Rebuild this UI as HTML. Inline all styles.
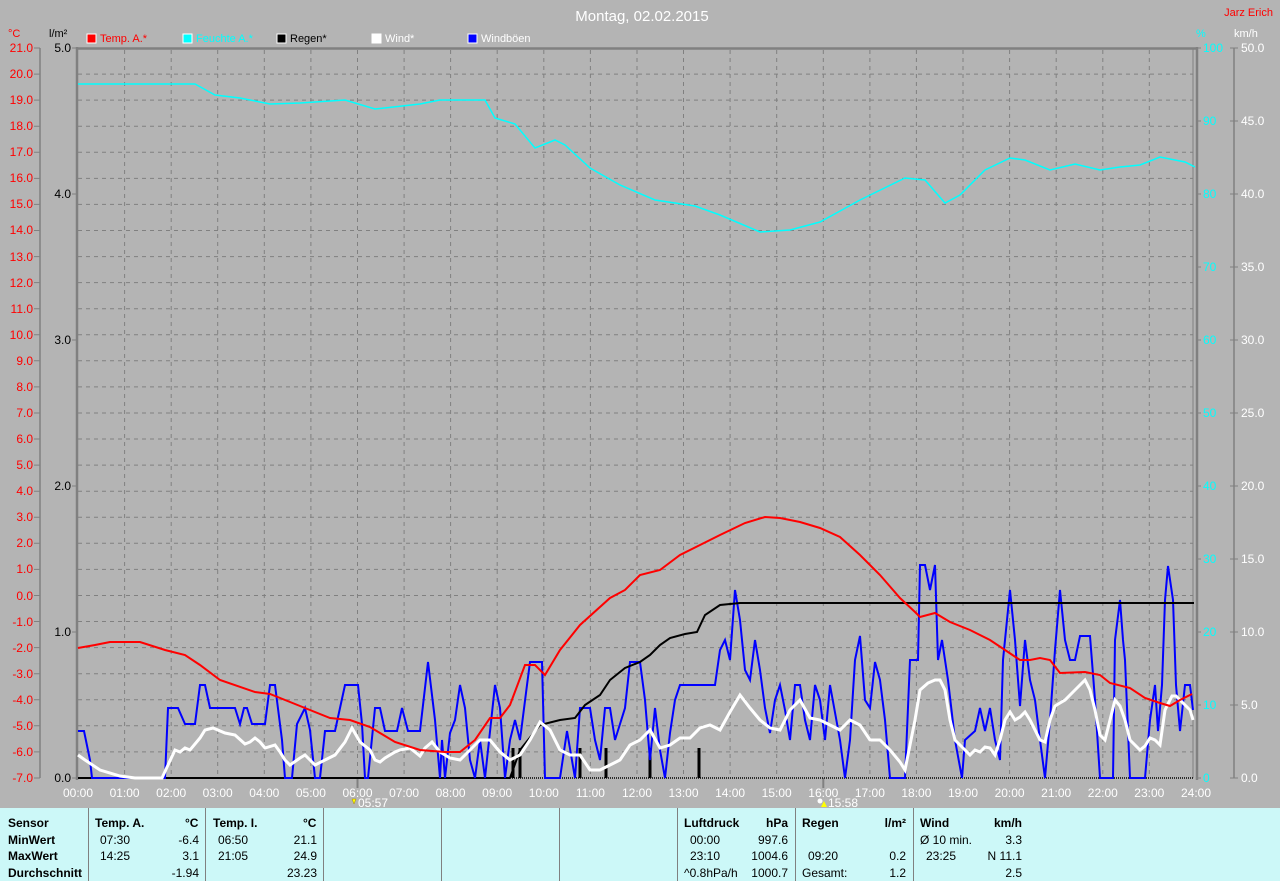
<!DOCTYPE html>
<html><head><meta charset="utf-8"><style>
html,body{margin:0;padding:0;width:1280px;height:881px;overflow:hidden;background:#b4b4b4;font-family:"Liberation Sans",sans-serif}
svg{position:absolute;left:0;top:0}
.tbl{position:absolute;left:0;top:808px;width:1280px;height:73px;background:#ccf8f8;font-size:12px;color:#000}
.col{position:absolute;top:0;height:73px;border-left:1px solid #808080}
.c{position:absolute;white-space:nowrap}
.b{font-weight:bold}
</style></head><body>
<svg width="1280" height="808" viewBox="0 0 1280 808" font-family="Liberation Sans, sans-serif">
<rect width="1280" height="808" fill="#b4b4b4"/>
<text x="642" y="21" font-size="15" fill="#fff" text-anchor="middle">Montag, 02.02.2015</text>
<text x="1273" y="16" font-size="11" fill="#f00" text-anchor="end">Jarz Erich</text>
<text x="8" y="37" font-size="11" fill="#f00">°C</text>
<text x="49" y="37" font-size="11" fill="#000">l/m²</text>
<text x="1196" y="37" font-size="11" fill="#0ff">%</text>
<text x="1234" y="37" font-size="11" fill="#fff">km/h</text>
<g font-size="11">
<rect x="87" y="34" width="9" height="9" fill="#f00" stroke="#fff"/><text x="100" y="42" fill="#f00">Temp. A.*</text>
<rect x="183" y="34" width="9" height="9" fill="#0ff" stroke="#fff"/><text x="196" y="42" fill="#0ff">Feuchte A.*</text>
<rect x="277" y="34" width="9" height="9" fill="#000" stroke="#fff"/><text x="290" y="42" fill="#000">Regen*</text>
<rect x="372" y="34" width="9" height="9" fill="#fff" stroke="#fff"/><text x="385" y="42" fill="#fff">Wind*</text>
<rect x="468" y="34" width="9" height="9" fill="#00f" stroke="#fff"/><text x="481" y="42" fill="#fff">Windböen</text>
</g>
<!-- grid -->
<g stroke="#808080" stroke-width="1" stroke-dasharray="4 4" fill="none">
<path d="M78 74.1H1193M78 100.1H1193M78 126.2H1193M78 152.3H1193M78 178.4H1193M78 204.4H1193M78 230.5H1193M78 256.6H1193M78 282.6H1193M78 308.7H1193M78 334.8H1193M78 360.8H1193M78 386.9H1193M78 413H1193M78 439H1193M78 465.1H1193M78 491.2H1193M78 517.3H1193M78 543.3H1193M78 569.4H1193M78 595.5H1193M78 621.5H1193M78 647.6H1193M78 673.7H1193M78 699.8H1193M78 725.8H1193M78 751.9H1193"/>
<path d="M124.6 50V778M171.2 50V778M217.7 50V778M264.3 50V778M310.9 50V778M357.5 50V778M404.1 50V778M450.6 50V778M497.2 50V778M543.8 50V778M590.4 50V778M637 50V778M683.5 50V778M730.1 50V778M776.7 50V778M823.3 50V778M869.9 50V778M916.4 50V778M963 50V778M1009.6 50V778M1056.2 50V778M1102.8 50V778M1149.3 50V778"/>
</g>
<!-- axes -->
<g stroke="#808080" fill="none">
<path d="M40 48V778" stroke-width="1.5"/>
<path d="M34 48H40M34 74.1H40M34 100.1H40M34 126.2H40M34 152.3H40M34 178.4H40M34 204.4H40M34 230.5H40M34 256.6H40M34 282.6H40M34 308.7H40M34 334.8H40M34 360.8H40M34 386.9H40M34 413H40M34 439H40M34 465.1H40M34 491.2H40M34 517.3H40M34 543.3H40M34 569.4H40M34 595.5H40M34 621.5H40M34 647.6H40M34 673.7H40M34 699.8H40M34 725.8H40M34 751.9H40M34 778H40"/>
<path d="M77 47V780" stroke-width="2.5"/>
<path d="M76 48.5H1198" stroke-width="2.5"/>
<path d="M72 48H77M72 194H77M72 340H77M72 486H77M72 632H77M72 778H77"/>
<path d="M1193 48V778"/>
<path d="M1197 47V780" stroke-width="2.5"/>
<path d="M1197 48H1201M1197 121H1201M1197 194H1201M1197 267H1201M1197 340H1201M1197 413H1201M1197 486H1201M1197 559H1201M1197 632H1201M1197 705H1201M1197 778H1201"/>
<path d="M1234 48V778" stroke-width="1.5"/>
<path d="M1230 48H1238M1230 121H1238M1230 194H1238M1230 267H1238M1230 340H1238M1230 413H1238M1230 486H1238M1230 559H1238M1230 632H1238M1230 705H1238M1230 778H1238"/>
<path d="M357.5 778V788M823.3 778V788" stroke-width="2"/>
</g>
<g font-size="12" fill="#f00" text-anchor="end">
<text x="33" y="52">21.0</text><text x="33" y="78">20.0</text><text x="33" y="104">19.0</text><text x="33" y="130">18.0</text><text x="33" y="156">17.0</text><text x="33" y="182">16.0</text><text x="33" y="208">15.0</text><text x="33" y="234">14.0</text><text x="33" y="261">13.0</text><text x="33" y="287">12.0</text><text x="33" y="313">11.0</text><text x="33" y="339">10.0</text><text x="33" y="365">9.0</text><text x="33" y="391">8.0</text><text x="33" y="417">7.0</text><text x="33" y="443">6.0</text><text x="33" y="469">5.0</text><text x="33" y="495">4.0</text><text x="33" y="521">3.0</text><text x="33" y="547">2.0</text><text x="33" y="573">1.0</text><text x="33" y="600">0.0</text><text x="33" y="626">-1.0</text><text x="33" y="652">-2.0</text><text x="33" y="678">-3.0</text><text x="33" y="704">-4.0</text><text x="33" y="730">-5.0</text><text x="33" y="756">-6.0</text><text x="33" y="782">-7.0</text>
</g>
<g font-size="12" fill="#000" text-anchor="end">
<text x="71" y="52">5.0</text><text x="71" y="198">4.0</text><text x="71" y="344">3.0</text><text x="71" y="490">2.0</text><text x="71" y="636">1.0</text><text x="71" y="782">0.0</text>
</g>
<g font-size="12" fill="#0ff">
<text x="1203" y="52">100</text><text x="1203" y="125">90</text><text x="1203" y="198">80</text><text x="1203" y="271">70</text><text x="1203" y="344">60</text><text x="1203" y="417">50</text><text x="1203" y="490">40</text><text x="1203" y="563">30</text><text x="1203" y="636">20</text><text x="1203" y="709">10</text><text x="1203" y="782">0</text>
</g>
<g font-size="12" fill="#fff">
<text x="1241" y="52">50.0</text><text x="1241" y="125">45.0</text><text x="1241" y="198">40.0</text><text x="1241" y="271">35.0</text><text x="1241" y="344">30.0</text><text x="1241" y="417">25.0</text><text x="1241" y="490">20.0</text><text x="1241" y="563">15.0</text><text x="1241" y="636">10.0</text><text x="1241" y="709">5.0</text><text x="1241" y="782">0.0</text>
</g>
<g font-size="12" fill="#fff" text-anchor="middle">
<text x="78" y="797">00:00</text><text x="124.6" y="797">01:00</text><text x="171.2" y="797">02:00</text><text x="217.7" y="797">03:00</text><text x="264.3" y="797">04:00</text><text x="310.9" y="797">05:00</text><text x="357.5" y="797">06:00</text><text x="404.1" y="797">07:00</text><text x="450.6" y="797">08:00</text><text x="497.2" y="797">09:00</text><text x="543.8" y="797">10:00</text><text x="590.4" y="797">11:00</text><text x="637" y="797">12:00</text><text x="683.5" y="797">13:00</text><text x="730.1" y="797">14:00</text><text x="776.7" y="797">15:00</text><text x="823.3" y="797">16:00</text><text x="869.9" y="797">17:00</text><text x="916.4" y="797">18:00</text><text x="963" y="797">19:00</text><text x="1009.6" y="797">20:00</text><text x="1056.2" y="797">21:00</text><text x="1102.8" y="797">22:00</text><text x="1149.3" y="797">23:00</text><text x="1196" y="797">24:00</text>
</g>
<path d="M352 799l2 5 2-5z" fill="#ff0" stroke="#a80" stroke-width=".5"/><text x="358" y="807" font-size="12" fill="#fff">05:57</text>
<circle cx="820" cy="801" r="2.5" fill="#fff"/><path d="M821 807l3-6 3 6z" fill="#ff0"/><text x="828" y="807" font-size="12" fill="#fff">15:58</text>
<!-- rain baseline -->
<path d="M78 778H1193" stroke="#000" stroke-width="1.5" stroke-dasharray="1 1"/>
<path d="M78 778H510" stroke="#000" stroke-width="2"/>
<!-- humidity -->
<polyline fill="none" stroke="#0ff" stroke-width="1.5" points="78,84 180,84 195,84 215,95 240,98 270,104 300,103 345,100 375,109 420,104 440,100 470,100 485,100 495,118 515,124 535,148 555,140 565,145 590,168 620,185 655,200 695,206 720,215 760,232 790,230 820,222 860,200 905,178 925,180 945,203 960,195 985,170 1010,158 1025,160 1050,170 1075,164 1100,170 1120,167 1140,165 1160,157 1185,162 1195,167"/>
<!-- rain bars -->
<g stroke="#000" stroke-width="3"><path d="M513 748V778M520 748V778M580 748V778M606 748V778M650 748V778M699 748V778"/></g>
<!-- gusts -->
<polyline fill="none" stroke="#00f" stroke-width="2" points="78,731 84,731 90,760 92,778 165,778 168,708 178,708 185,724 195,724 200,685 205,685 210,708 235,708 240,724 244,708 247,708 252,724 265,724 270,685 275,685 282,740 285,778 292,778 297,724 305,708 310,730 315,778 320,778 325,731 335,731 340,708 345,685 358,685 362,724 365,778 368,778 375,708 380,708 385,731 397,731 402,708 408,731 420,731 428,662 435,720 440,778 442,740 445,778 450,733 455,720 460,685 465,708 470,760 475,778 480,740 485,778 495,685 500,708 505,778 510,740 515,720 520,740 527,685 530,662 542,662 545,778 560,778 567,731 575,778 580,708 590,708 595,740 600,760 605,708 610,708 615,740 625,708 630,662 640,662 645,700 650,760 655,708 660,750 665,778 670,733 675,700 680,685 715,685 720,650 725,640 730,660 735,590 740,620 745,670 750,680 755,640 760,670 765,708 770,733 775,700 780,685 785,710 790,740 795,685 800,685 805,720 810,740 815,685 820,700 825,740 830,685 840,740 845,778 850,740 855,660 860,636 865,700 870,708 875,662 880,680 885,720 890,778 905,778 910,660 918,660 920,565 925,565 930,590 935,565 938,660 942,640 948,680 955,740 962,778 965,740 975,731 980,708 985,731 990,708 995,740 1000,760 1003,660 1010,590 1015,640 1020,706 1025,640 1030,680 1035,700 1040,740 1045,778 1050,720 1055,650 1060,590 1065,640 1070,660 1075,660 1080,636 1090,636 1095,700 1100,778 1113,778 1115,640 1120,600 1123,640 1125,660 1130,778 1145,778 1150,720 1155,685 1158,731 1162,685 1165,600 1168,566 1173,600 1176,685 1180,731 1185,685 1190,685 1193,710"/>
<!-- rain cumulative -->
<polyline fill="none" stroke="#000" stroke-width="2" points="510,778 520,750 540,725 560,720 575,718 585,705 600,695 610,680 625,668 640,662 650,655 660,645 670,638 685,634 697,632 705,615 720,605 740,603 1194,603"/>
<!-- wind -->
<polyline fill="none" stroke="#fff" stroke-width="3" points="78,755 85,760 100,770 120,776 135,778 162,778 168,765 175,750 180,752 185,748 190,750 200,738 205,730 213,728 225,733 235,735 245,744 250,742 255,738 260,742 265,748 275,745 280,752 285,760 290,765 300,758 305,755 310,760 315,765 325,760 335,755 345,742 352,728 360,742 370,750 375,760 380,762 385,758 395,752 400,750 410,748 420,756 425,748 432,742 440,752 450,758 460,760 470,750 480,740 490,740 500,752 510,760 520,755 530,740 540,722 550,730 560,750 570,755 580,755 590,770 600,770 610,765 620,760 630,745 640,740 650,730 660,748 670,745 680,738 690,738 700,728 710,725 720,730 730,712 740,695 750,708 760,720 770,728 780,730 790,710 800,700 810,718 820,720 830,725 840,730 850,720 860,725 870,740 880,740 890,750 900,762 905,770 910,745 915,720 920,690 928,683 935,680 940,680 945,690 950,720 955,740 960,745 970,755 975,750 980,752 985,747 990,748 995,755 1000,740 1005,720 1010,712 1015,720 1020,717 1025,712 1030,720 1035,730 1040,740 1045,742 1050,720 1055,706 1060,703 1065,700 1075,690 1085,680 1090,690 1095,710 1100,735 1105,740 1110,720 1115,700 1120,706 1125,720 1130,740 1140,750 1145,746 1150,738 1155,740 1160,745 1165,710 1172,696 1176,696 1180,700 1185,705 1190,710 1193,720"/>
<!-- temp -->
<polyline fill="none" stroke="#f00" stroke-width="2" points="78,648 95,645 110,642 140,642 165,650 185,655 200,665 220,680 255,692 270,694 300,706 330,718 350,720 370,727 395,742 420,750 445,752 460,752 475,740 490,718 500,718 510,705 525,665 535,665 545,675 560,650 580,625 610,598 625,590 640,575 660,570 680,555 700,545 720,535 745,523 765,517 780,518 800,522 820,528 840,537 860,555 880,575 900,598 915,612 920,617 935,613 950,622 970,630 990,640 1005,650 1020,660 1030,660 1040,658 1050,660 1060,673 1085,672 1100,675 1110,683 1130,688 1145,698 1160,703 1170,706 1180,700 1192,694"/>
</svg>
<div class="tbl">
<div class="col" style="left:88px"></div><div class="col" style="left:205px"></div><div class="col" style="left:323px"></div><div class="col" style="left:441px"></div><div class="col" style="left:559px"></div><div class="col" style="left:677px"></div><div class="col" style="left:795px"></div><div class="col" style="left:913px"></div>
<div class="c b" style="left:8px;top:8px">Sensor</div>
<div class="c b" style="left:8px;top:25px">MinWert</div>
<div class="c b" style="left:8px;top:41px">MaxWert</div>
<div class="c b" style="left:8px;top:58px">Durchschnitt</div>
<div class="c b" style="left:95px;top:8px">Temp. A.</div><div class="c b" style="left:185px;top:8px">°C</div>
<div class="c" style="left:100px;top:25px">07:30</div><div class="c" style="right:1081px;top:25px">-6.4</div>
<div class="c" style="left:100px;top:41px">14:25</div><div class="c" style="right:1081px;top:41px">3.1</div>
<div class="c" style="right:1081px;top:58px">-1.94</div>
<div class="c b" style="left:213px;top:8px">Temp. I.</div><div class="c b" style="left:303px;top:8px">°C</div>
<div class="c" style="left:218px;top:25px">06:50</div><div class="c" style="right:963px;top:25px">21.1</div>
<div class="c" style="left:218px;top:41px">21:05</div><div class="c" style="right:963px;top:41px">24.9</div>
<div class="c" style="right:963px;top:58px">23.23</div>
<div class="c b" style="left:684px;top:8px">Luftdruck</div><div class="c b" style="right:492px;top:8px">hPa</div>
<div class="c" style="left:690px;top:25px">00:00</div><div class="c" style="right:492px;top:25px">997.6</div>
<div class="c" style="left:690px;top:41px">23:10</div><div class="c" style="right:492px;top:41px">1004.6</div>
<div class="c" style="left:684px;top:58px">^0.8hPa/h</div><div class="c" style="right:492px;top:58px">1000.7</div>
<div class="c b" style="left:802px;top:8px">Regen</div><div class="c b" style="right:374px;top:8px">l/m²</div>
<div class="c" style="left:808px;top:41px">09:20</div><div class="c" style="right:374px;top:41px">0.2</div>
<div class="c" style="left:802px;top:58px">Gesamt:</div><div class="c" style="right:374px;top:58px">1.2</div>
<div class="c b" style="left:920px;top:8px">Wind</div><div class="c b" style="right:258px;top:8px">km/h</div>
<div class="c" style="left:920px;top:25px">Ø 10 min.</div><div class="c" style="right:258px;top:25px">3.3</div>
<div class="c" style="left:926px;top:41px">23:25</div><div class="c" style="right:258px;top:41px">N 11.1</div>
<div class="c" style="right:258px;top:58px">2.5</div>
</div>
</body></html>
